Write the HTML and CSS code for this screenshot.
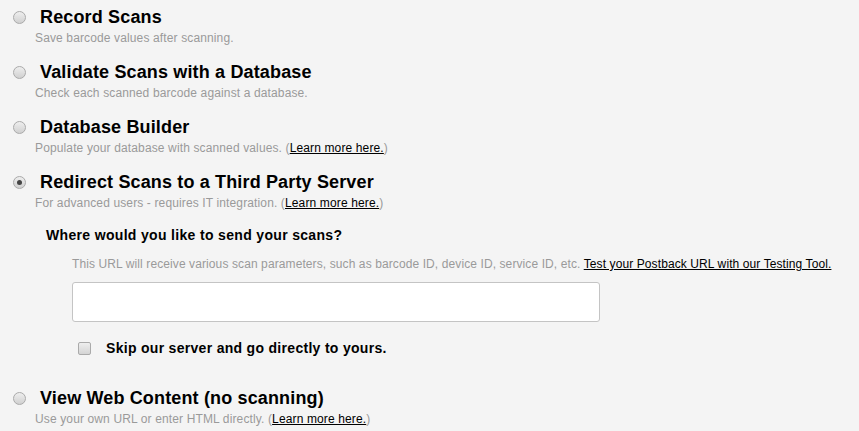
FILE: index.html
```html
<!DOCTYPE html>
<html lang="en">
<head>
    <meta charset="UTF-8">
    <title>Scan Destination</title>
    <link rel="stylesheet" href="styles.css">
</head>
<body>

    <div class="options">
        <div class="option">
            <label class="option-head">
                <input type="radio" name="mode" class="radio">
                <span class="option-title">Record Scans</span>
            </label>
            <p class="option-desc">Save barcode values after scanning.</p>
        </div>

        <div class="option">
            <label class="option-head">
                <input type="radio" name="mode" class="radio">
                <span class="option-title">Validate Scans with a Database</span>
            </label>
            <p class="option-desc">Check each scanned barcode against a database.</p>
        </div>

        <div class="option">
            <label class="option-head">
                <input type="radio" name="mode" class="radio">
                <span class="option-title">Database Builder</span>
            </label>
            <p class="option-desc">Populate your database with scanned values. (<a href="#">Learn more here.</a>)</p>
        </div>

        <div class="option">
            <label class="option-head">
                <input type="radio" name="mode" class="radio" checked>
                <span class="option-title">Redirect Scans to a Third Party Server</span>
            </label>
            <p class="option-desc">For advanced users - requires IT integration. (<a href="#">Learn more here.</a>)</p>

            <div class="config">
                <h3 class="config-title">Where would you like to send your scans?</h3>
                <p class="config-note">This URL will receive various scan parameters, such as barcode ID, device ID, service ID, etc. <a href="#">Test your Postback URL with our Testing Tool.</a></p>
                <input type="text" class="url-input">
                <label class="skip-row">
                    <input type="checkbox" class="checkbox">
                    <span>Skip our server and go directly to yours.</span>
                </label>
            </div>
        </div>

        <div class="option">
            <label class="option-head">
                <input type="radio" name="mode" class="radio">
                <span class="option-title">View Web Content (no scanning)</span>
            </label>
            <p class="option-desc">Use your own URL or enter HTML directly. (<a href="#">Learn more here.</a>)</p>
        </div>
    </div>

</body>
</html>
```

FILE: styles.css
```css
body {
    margin: 0;
    padding: 7px 0 0 0;
    background-color: #f4f4f4;
    font-family: "Liberation Sans", Arial, sans-serif;
    color: #000;
}
.option {
    padding-left: 13px;
    margin-bottom: 16px;
}
.option-head {
    display: flex;
    align-items: center;
    gap: 14px;
    height: 20px;
}
.option-title {
    font-size: 18px;
    font-weight: bold;
    line-height: 20px;
    letter-spacing: 0.15px;
}
.radio {
    appearance: none;
    -webkit-appearance: none;
    margin: 0;
    width: 13px;
    height: 13px;
    border-radius: 50%;
    border: 1px solid #aaa;
    background: linear-gradient(#eee, #d0d0d0);
    box-sizing: border-box;
    display: flex;
    align-items: center;
    justify-content: center;
}
.radio:checked::after {
    content: "";
    width: 5px;
    height: 5px;
    border-radius: 50%;
    background-color: #444;
}
.option-desc {
    margin: 3px 0 0 22px;
    font-size: 12px;
    line-height: 16px;
    letter-spacing: 0.13px;
    color: #9a9a9a;
}
.option-desc a, .config-note a {
    color: #000;
    text-decoration: underline;
}
.config {
    margin: 15px 0 31px 33px;
}
.config-title {
    margin: 0;
    font-size: 14px;
    line-height: 18px;
    font-weight: bold;
    letter-spacing: 0.33px;
}
.config-note {
    margin: 12px 0 0 26px;
    font-size: 12px;
    line-height: 16px;
    letter-spacing: 0.1px;
    color: #9a9a9a;
}
.url-input {
    display: block;
    margin: 10px 0 0 26px;
    width: 528px;
    height: 40px;
    box-sizing: border-box;
    border: 1px solid #c4c4c4;
    border-radius: 3px;
    background-color: #fff;
}
.skip-row {
    display: flex;
    align-items: center;
    gap: 15px;
    margin: 17px 0 0 32px;
    height: 18px;
    font-size: 14px;
    font-weight: bold;
    letter-spacing: 0.3px;
}
.checkbox {
    appearance: none;
    -webkit-appearance: none;
    margin: 0;
    width: 13px;
    height: 13px;
    border: 1px solid #aaa;
    border-radius: 2px;
    background: linear-gradient(#eee, #d4d4d4);
    box-sizing: border-box;
}
```
